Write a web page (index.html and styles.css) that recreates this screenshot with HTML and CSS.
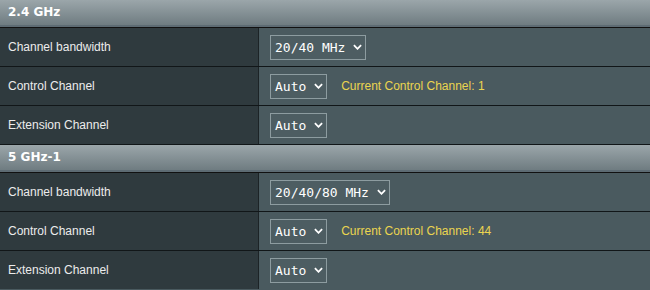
FILE: index.html
```html
<!DOCTYPE html>
<html lang="en">
<head>
    <meta charset="UTF-8" />
    <title>Wireless - Professional</title>
    <link rel="stylesheet" href="styles.css">
</head>
<body>
    <div class="panel">
        <div class="section-head">2.4 GHz</div>
        <div class="row">
            <div class="label">Channel bandwidth</div>
            <div class="value">
                <span class="select">20/40 MHz <svg class="chev" viewBox="0 0 10 6"><path d="M1 1 L5 5 L9 1" /></svg></span>
            </div>
        </div>
        <div class="row">
            <div class="label">Control Channel</div>
            <div class="value">
                <span class="select">Auto <svg class="chev" viewBox="0 0 10 6"><path d="M1 1 L5 5 L9 1" /></svg></span>
                <span class="hint">Current Control Channel: 1</span>
            </div>
        </div>
        <div class="row">
            <div class="label">Extension Channel</div>
            <div class="value">
                <span class="select">Auto <svg class="chev" viewBox="0 0 10 6"><path d="M1 1 L5 5 L9 1" /></svg></span>
            </div>
        </div>

        <div class="section-head">5 GHz-1</div>
        <div class="row">
            <div class="label">Channel bandwidth</div>
            <div class="value">
                <span class="select">20/40/80 MHz <svg class="chev" viewBox="0 0 10 6"><path d="M1 1 L5 5 L9 1" /></svg></span>
            </div>
        </div>
        <div class="row">
            <div class="label">Control Channel</div>
            <div class="value">
                <span class="select">Auto <svg class="chev" viewBox="0 0 10 6"><path d="M1 1 L5 5 L9 1" /></svg></span>
                <span class="hint">Current Control Channel: 44</span>
            </div>
        </div>
        <div class="row">
            <div class="label">Extension Channel</div>
            <div class="value">
                <span class="select">Auto <svg class="chev" viewBox="0 0 10 6"><path d="M1 1 L5 5 L9 1" /></svg></span>
            </div>
        </div>
    </div>
</body>
</html>
```

FILE: styles.css
```css
body {
    margin: 0;
    padding: 0;
    background: #4a5a5f;
    font-family: "Liberation Sans", Arial, sans-serif;
    font-size: 12px;
    color: #ececec;
}

.panel {
    width: 650px;
}

.section-head {
    height: 25px;
    line-height: 25px;
    padding-left: 8px;
    font-family: "DejaVu Sans", Verdana, sans-serif;
    font-size: 12px;
    font-weight: bold;
    color: #ffffff;
    background: linear-gradient(to bottom, #9ba6aa, #6f7c81);
    border-bottom: 2px solid #5d6b73;
    box-shadow: 0 1px 0 #111;
    margin-bottom: 1px;
}

.row {
    display: flex;
    height: 38px;
    border-bottom: 1px solid #111618;
}

.row:last-child {
    border-bottom: none;
}

.label {
    width: 250px;
    padding-left: 8px;
    display: flex;
    align-items: center;
    background: #2f3a3e;
    border-right: 1px solid #1c2326;
}

.value {
    flex: 1;
    display: flex;
    align-items: center;
    padding-left: 11px;
    background: #4a5a5f;
}

.select {
    display: inline-flex;
    align-items: center;
    height: 23px;
    padding: 0 3px 0 4px;
    border: 1px solid #8d9ca0;
    background: #4d5d62;
    color: #ffffff;
    font-family: "DejaVu Sans Mono", monospace;
    font-size: 13px;
    white-space: pre;
}

.chev {
    width: 9px;
    height: 6px;
    fill: none;
    stroke: #ffffff;
    stroke-width: 2;
}

.hint {
    margin-left: 14px;
    color: #ead54f;
}
```
